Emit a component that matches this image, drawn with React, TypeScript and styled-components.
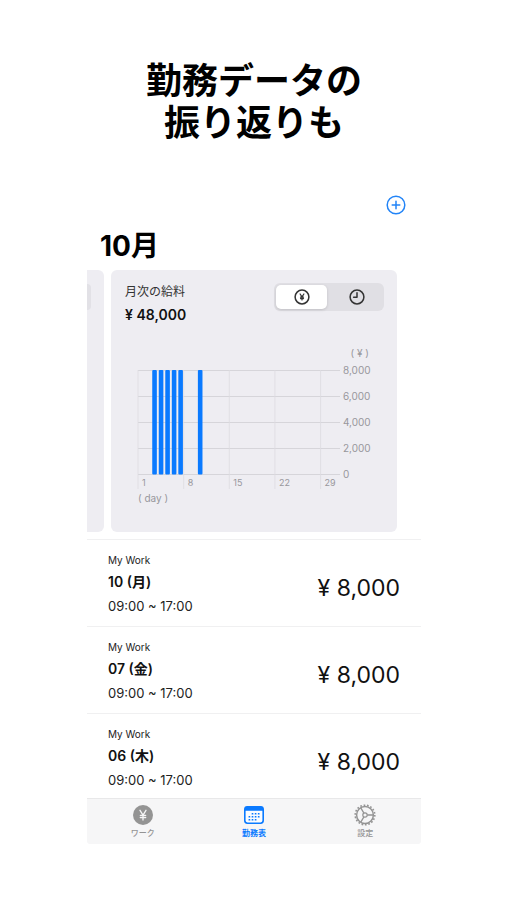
import React, { useState } from "react";
import styled, { createGlobalStyle } from "styled-components";

const GlobalStyle = createGlobalStyle`
  *, *::before, *::after { box-sizing: border-box; }
  body {
    margin: 0;
    background: #fff;
    color: #111;
    font-family: Inter, "Noto Sans CJK JP", sans-serif;
  }
  button { font: inherit; }
`;

const Page = styled.main`
  padding: 61px 86px 56px 87px;
`;

const Headline = styled.h1`
  margin: 0;
  text-align: center;
  font-family: "Liberation Sans", "Noto Sans CJK JP", sans-serif;
  font-size: 36px;
  line-height: 42px;
  font-weight: 700;
  color: #000;
`;

const Screen = styled.section`
  display: flex;
  flex-direction: column;
  margin-top: 45px;
`;

const Toolbar = styled.header`
  display: flex;
  justify-content: flex-end;
  padding: 5px 15px 3px;
`;

const AddButton = styled.button`
  display: flex;
  padding: 0;
  border: 0;
  background: none;
  color: #2284f7;
  cursor: pointer;
`;

const MonthTitle = styled.h2`
  margin: 0;
  padding: 11px 13px 7px;
  font-size: 28px;
  line-height: 34px;
  font-weight: 700;
  color: #000;
`;

const Carousel = styled.div`
  display: flex;
  gap: 7px;
  padding-right: 24px;
`;

const PreviousCard = styled.div`
  width: 17px;
  padding-top: 14px;
  border-radius: 0 6px 6px 0;
  background: #eeedf2;
`;

const PreviousSwitch = styled.div`
  width: 4px;
  height: 26px;
  border-radius: 0 4px 4px 0;
  background: #e2e1e6;
`;

const Card = styled.article`
  flex: 1;
  min-width: 0;
  padding: 13px 13px 26px 14px;
  border-radius: 6px;
  background: #eeedf2;
`;

const CardHead = styled.div`
  display: flex;
  justify-content: space-between;
  align-items: flex-start;
`;

const CardLabel = styled.h3`
  margin: 0;
  font-size: 12px;
  line-height: 18px;
  font-weight: 400;
  color: #333;
`;

const CardTotal = styled.p`
  margin: 4px 0 0;
  font-size: 14px;
  line-height: 20px;
  font-weight: 600;
`;

const Segmented = styled.div`
  display: flex;
  gap: 4px;
  width: 110px;
  height: 28px;
  padding: 2px;
  border-radius: 6px;
  background: #e0dfe4;
`;

const Segment = styled.button<{ $active: boolean }>`
  flex: 1;
  display: flex;
  align-items: center;
  justify-content: center;
  padding: 0;
  border: 0;
  border-radius: 5px;
  background: ${(p) => (p.$active ? "#fff" : "transparent")};
  box-shadow: ${(p) => (p.$active ? "0 1px 3px rgba(0, 0, 0, 0.14)" : "none")};
  color: #333;
  cursor: pointer;
`;

const ChartSvg = styled.svg`
  display: block;
  width: 100%;
  height: auto;
  margin-top: 20px;
  font-size: 10px;
  fill: #98979c;
`;

const ShiftList = styled.ul`
  margin: 7px 0 0;
  padding: 0;
  list-style: none;
`;

const Shift = styled.li`
  display: flex;
  align-items: center;
  justify-content: space-between;
  padding: 11px 21px 9px;
  border-top: 1px solid #f0f0f1;

  &:last-child { padding-bottom: 7px; }
`;

const Workplace = styled.div`
  font-size: 10px;
  line-height: 18px;
  color: #222;
`;

const ShiftDate = styled.div`
  font-size: 14px;
  line-height: 26px;
  font-weight: 600;
`;

const ShiftTime = styled.div`
  font-size: 13px;
  line-height: 22px;
  color: #222;
`;

const Pay = styled.div`
  padding-top: 7px;
  font-size: 23px;
  line-height: 30px;
`;

const TabBar = styled.nav`
  display: flex;
  border-top: 1px solid #e8e8e9;
  border-radius: 0 0 3px 3px;
  background: #f6f6f7;
`;

const TabLink = styled.a<{ $active?: boolean }>`
  flex: 1;
  display: flex;
  flex-direction: column;
  align-items: center;
  padding: 5px 0 4px;
  color: ${(p) => (p.$active ? "#0a7aff" : "#949494")};
  font-size: 8px;
  line-height: 14px;
  font-weight: ${(p) => (p.$active ? 700 : 500)};
  text-decoration: none;
`;

const PlusCircleIcon = () => (
  <svg width="20" height="20" viewBox="0 0 20 20" fill="none" stroke="currentColor" strokeWidth="1.5" strokeLinecap="round">
    <circle cx="10" cy="10" r="8.8" />
    <path d="M10 6.2v7.6M6.2 10h7.6" />
  </svg>
);

const YenCircleIcon = () => (
  <svg width="16" height="16" viewBox="0 0 16 16" fill="none" stroke="currentColor" strokeWidth="1.5" strokeLinecap="round">
    <circle cx="8" cy="8" r="6.9" />
    <path d="M6.1 5 8 7.9 9.9 5M8 8v3M6.5 8.2h3M6.5 9.6h3" strokeWidth="1.2" />
  </svg>
);

const ClockIcon = () => (
  <svg width="16" height="16" viewBox="0 0 16 16" fill="none" stroke="currentColor" strokeWidth="1.5" strokeLinecap="round">
    <circle cx="8" cy="8" r="6.9" />
    <path d="M8 3.8v4.4H4.6" strokeLinejoin="round" />
  </svg>
);

const YenFilledIcon = () => (
  <svg width="22" height="22" viewBox="0 0 22 22">
    <circle cx="11" cy="11" r="10" fill="currentColor" />
    <path d="M8 6.3 11 11l3-4.7M11 11v5M8.3 11.3h5.4M8.3 13.5h5.4" fill="none" stroke="#f6f6f7" strokeWidth="1.3" strokeLinecap="round" />
  </svg>
);

const calendarDots = [
  [8.6, 9], [11.7, 9], [14.8, 9],
  [5.5, 12], [8.6, 12], [11.7, 12], [14.8, 12],
  [5.5, 15], [8.6, 15], [11.7, 15],
];

const CalendarIcon = () => (
  <svg width="22" height="22" viewBox="0 0 22 22">
    <rect x="1.8" y="2.8" width="18.4" height="16.4" rx="2.6" fill="#fafcff" stroke="currentColor" strokeWidth="1.6" />
    <path d="M1.8 6.8V5a2.6 2.6 0 0 1 2.6-2.6h13.2A2.6 2.6 0 0 1 20.2 5v1.8z" fill="currentColor" />
    {calendarDots.map(([x, y]) => (
      <rect key={`${x}-${y}`} x={x} y={y} width="1.8" height="1.6" rx="0.4" fill="currentColor" />
    ))}
  </svg>
);

const GearIcon = () => (
  <svg width="22" height="22" viewBox="0 0 22 22" fill="none" stroke="currentColor">
    <circle cx="11" cy="11" r="9.8" strokeWidth="1.6" strokeDasharray="1.7 1.72" />
    <circle cx="11" cy="11" r="8.4" strokeWidth="1.5" />
    <circle cx="11" cy="11" r="2.2" strokeWidth="1.2" />
    <path d="M13.2 11h6.2M9.9 9.1 6.8 3.8M9.9 12.9l-3.1 5.3" strokeWidth="1.3" />
  </svg>
);

const workedDays = [3, 4, 5, 6, 7, 10];
const dayTicks = [1, 8, 15, 22, 29];
const payTicks = ["8,000", "6,000", "4,000", "2,000", "0"];
const dayWidth = 6.52;
const dayX = (day: number) => 13 + (day - 1) * dayWidth;

const PayChart = () => (
  <ChartSvg viewBox="0 0 259 161" role="img" aria-label="月次の給料">
    {payTicks.map((label, i) => (
      <g key={label}>
        <path d={`M13 ${25.5 + i * 26}H215`} stroke="#d6d5da" />
        <text x="218" y={29 + i * 26}>{label}</text>
      </g>
    ))}
    {dayTicks.map((day) => (
      <g key={day}>
        <path d={`M${dayX(day)} 25V144`} stroke="#dddce1" strokeWidth="0.8" />
        <text x={dayX(day) + 4} y="141" fontSize="9">{day}</text>
      </g>
    ))}
    {workedDays.map((day) => (
      <rect key={day} x={dayX(day) + 1.2} y="25" width="4.6" height="104.5" rx="1" fill="#0a7aff" />
    ))}
    <text x="244" y="12" textAnchor="end">( ¥ )</text>
    <text x="13" y="157">( day )</text>
  </ChartSvg>
);

const shifts = [
  { date: "10 (月)", time: "09:00 ~ 17:00", pay: "¥ 8,000" },
  { date: "07 (金)", time: "09:00 ~ 17:00", pay: "¥ 8,000" },
  { date: "06 (木)", time: "09:00 ~ 17:00", pay: "¥ 8,000" },
];

export default function App() {
  const [mode, setMode] = useState<"pay" | "time">("pay");
  return (
    <>
      <GlobalStyle />
      <Page>
        <Headline>
          勤務データの
          <br />
          振り返りも
        </Headline>
        <Screen>
          <Toolbar>
            <AddButton type="button" aria-label="追加">
              <PlusCircleIcon />
            </AddButton>
          </Toolbar>
          <MonthTitle>10月</MonthTitle>
          <Carousel>
            <PreviousCard>
              <PreviousSwitch />
            </PreviousCard>
            <Card>
              <CardHead>
                <div>
                  <CardLabel>月次の給料</CardLabel>
                  <CardTotal>¥ 48,000</CardTotal>
                </div>
                <Segmented>
                  <Segment type="button" aria-label="給料" aria-pressed={mode === "pay"} $active={mode === "pay"} onClick={() => setMode("pay")}>
                    <YenCircleIcon />
                  </Segment>
                  <Segment type="button" aria-label="時間" aria-pressed={mode === "time"} $active={mode === "time"} onClick={() => setMode("time")}>
                    <ClockIcon />
                  </Segment>
                </Segmented>
              </CardHead>
              <PayChart />
            </Card>
          </Carousel>
          <ShiftList>
            {shifts.map((s) => (
              <Shift key={s.date}>
                <div>
                  <Workplace>My Work</Workplace>
                  <ShiftDate>{s.date}</ShiftDate>
                  <ShiftTime>{s.time}</ShiftTime>
                </div>
                <Pay>{s.pay}</Pay>
              </Shift>
            ))}
          </ShiftList>
          <TabBar>
            <TabLink href="#work">
              <YenFilledIcon />
              ワーク
            </TabLink>
            <TabLink href="#shifts" $active aria-current="page">
              <CalendarIcon />
              勤務表
            </TabLink>
            <TabLink href="#settings">
              <GearIcon />
              設定
            </TabLink>
          </TabBar>
        </Screen>
      </Page>
    </>
  );
}
